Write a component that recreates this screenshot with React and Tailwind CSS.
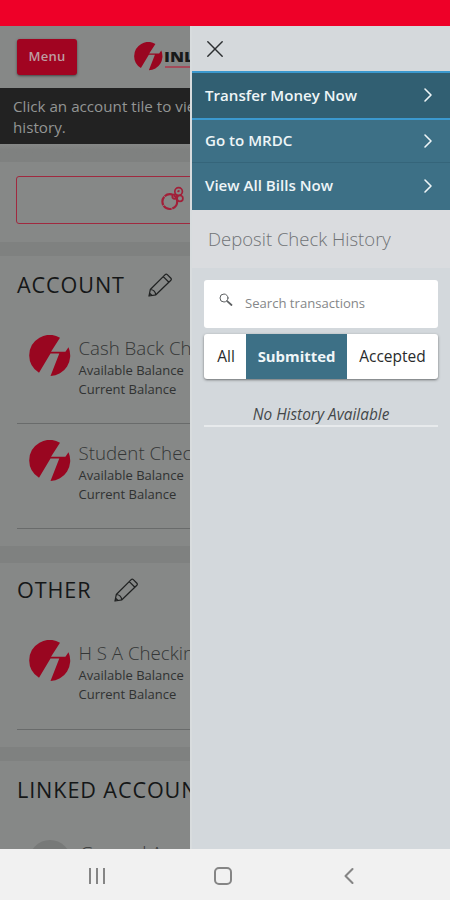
import { ChevronLeft, ChevronRight, X } from "lucide-react";

const actions = ["Transfer Money Now", "Go to MRDC", "View All Bills Now"];

function BrandMark({ className }) {
  return (
    <svg viewBox="0 0 42 42" className={className} fill="currentColor">
      <path d="M31 2.8 22 16.7H36.4L39.5 12.3A20.5 20.5 0 0 1 21.5 41L30.3 18.4H21.5L10 37.7A20.5 20.5 0 0 1 .2 20.5 20.5 20.5 0 0 1 31 2.8Z" />
    </svg>
  );
}

function Pencil() {
  return (
    <svg
      viewBox="0 0 24 24"
      className="h-6 w-6 text-[#202222]"
      fill="none"
      stroke="currentColor"
      strokeWidth="1.25"
      strokeLinejoin="round"
    >
      <path d="M1 23 2.3 16.5 17.2 1.6Q18.3.7 19.3 1.6L22.9 5.2Q23.7 6.2 22.9 7.2L7.9 21.8ZM2.3 16.5Q6.8 16.6 7.9 21.8M15.3 3.6 20.9 9.2M1 23 1.6 20.3 3.7 22.3Z" />
    </svg>
  );
}

function BubblesIcon() {
  return (
    <svg
      viewBox="0 0 24 25"
      className="h-[25px] w-6 text-[#a21f38]"
      fill="none"
      stroke="currentColor"
      strokeWidth="1.7"
    >
      <circle cx="8.8" cy="15.6" r="7.4" strokeWidth="2.2" strokeDasharray="9 .7" />
      <circle cx="17.6" cy="5.5" r="3.8" />
      <circle cx="19" cy="12.4" r="2.9" />
      <circle cx="13.6" cy="10.6" r="2.3" />
      <path d="M16.5 5.8l2-1.2" />
    </svg>
  );
}

function SectionTitle({ children, className = "" }) {
  return (
    <div className={`flex items-center pl-[17px] ${className}`}>
      <h2 className="text-[21.6px] leading-7 tracking-[0.9px] whitespace-nowrap text-[#151717]">
        {children}
      </h2>
    </div>
  );
}

function AccountTile({ name, className = "" }) {
  return (
    <div className={`ml-[17px] flex border-b border-[#696b6b] pl-3 ${className}`}>
      <BrandMark className="h-[42px] w-[42px] shrink-0 text-[#990620]" />
      <div className="ml-[7.5px] whitespace-nowrap">
        <div className="text-[18.7px] leading-[26px] font-light text-[#343636]">{name}</div>
        <div className="text-[13px] leading-[19px] text-[#303232]">
          <div>Available Balance</div>
          <div>Current Balance</div>
        </div>
      </div>
    </div>
  );
}

function AccountsPage() {
  return (
    <main className="flex w-[190px] shrink-0 flex-col overflow-hidden bg-[#868887]">
      <header className="flex h-[62px] shrink-0 items-start pl-[17px]">
        <button className="mt-[13px] h-9 w-[60px] shrink-0 rounded-[3px] bg-[#a10421] pb-px text-[13px] font-semibold tracking-[0.2px] text-[#bd9da1] shadow-sm shadow-black/40">
          Menu
        </button>
        <BrandMark className="mt-4 ml-[57px] h-[29px] w-[29px] shrink-0 text-[#990620]" />
        <div className="mt-[22px] ml-px whitespace-nowrap">
          <div className="origin-left scale-x-115 text-[14.7px] leading-[17px] font-extrabold text-[#171919]">
            INLAND
          </div>
          <div className="mt-px ml-px h-0.5 w-20 bg-[#a34b5a]" />
        </div>
      </header>

      <div className="h-14 shrink-0 bg-[#222222] pt-2 pl-[13px] text-[15.2px] leading-[21px] whitespace-nowrap text-[#939594]">
        Click an account tile to view
        <br />
        history.
      </div>
      <div className="h-[18px] shrink-0 bg-linear-to-b from-[#868887] to-[#7f8180] to-30%" />

      <div className="h-20 shrink-0 pt-[14px] pl-4">
        <div className="flex h-12 w-[260px] items-center rounded-[3px] border-[1.5px] border-[#a0293f] pb-1 pl-36">
          <BubblesIcon />
        </div>
      </div>
      <div className="h-[14px] shrink-0 bg-[#7f8180]" />

      <section className="h-[290px] shrink-0">
        <div className="flex h-[58px] items-center">
          <SectionTitle>ACCOUNT</SectionTitle>
          <div className="ml-[23px]">
            <Pencil />
          </div>
        </div>
        <AccountTile name="Cash Back Checking" className="mt-[21px] h-[89px]" />
        <AccountTile name="Student Checking" className="h-[105px] pt-4" />
      </section>
      <div className="h-[17px] shrink-0 bg-[#7f8180]" />

      <section className="h-[184px] shrink-0">
        <div className="flex h-[54px] items-center">
          <SectionTitle>OTHER</SectionTitle>
          <div className="ml-[23px]">
            <Pencil />
          </div>
        </div>
        <AccountTile name="H S A Checking" className="mt-[23px] h-[90px]" />
      </section>
      <div className="h-[14px] shrink-0 bg-[#7f8180]" />

      <section className="shrink-0">
        <SectionTitle className="h-[57px]">LINKED ACCOUNTS</SectionTitle>
        <div className="mt-[22px] flex pl-[29px]">
          <div className="h-[42px] w-[42px] shrink-0 rounded-full bg-[#777978]" />
          <div className="ml-[9px] text-[18.7px] leading-[26px] font-light whitespace-nowrap text-[#343636]">
            General Account
          </div>
        </div>
      </section>
    </main>
  );
}

function ActionsDrawer() {
  return (
    <aside className="flex w-[260px] shrink-0 flex-col border-l-2 border-[#d8dcde] bg-[#d3d8dc]">
      <div className="flex h-[45px] shrink-0 items-center bg-[#d5d9dc] pl-[11px]">
        <X className="h-6 w-6 text-[#2c2f31]" strokeWidth={1.2} viewBox="2 2 20 20" />
      </div>

      <nav className="flex flex-col">
        {actions.map((label, i) => (
          <button
            key={label}
            className={`flex items-center justify-between pr-[10px] pl-[13px] text-left text-[15.1px] font-semibold text-[#eef5f7] ${
              i === 0
                ? "h-[49px] border-y-2 border-[#3b99cf] bg-[#315f72] pb-px"
                : i === 1
                  ? "h-[43px] border-b border-[#35657a] bg-[#3d7086] pb-px"
                  : "h-[47px] bg-[#3d7086] pb-0.5"
            }`}
          >
            {label}
            <ChevronRight className="h-6 w-6" strokeWidth={1.6} />
          </button>
        ))}
      </nav>

      <h1 className="flex h-[58px] shrink-0 items-center bg-[#dadcdf] pl-4 text-[18.5px] font-light text-[#707376]">
        Deposit Check History
      </h1>

      <div className="mx-3 mt-3 flex h-12 shrink-0 items-center rounded-[3px] bg-white pl-[15px]">
        <svg
          viewBox="0 0 14 14"
          className="mb-2 h-[14px] w-[14px] text-[#5e6163]"
          fill="none"
          stroke="currentColor"
          strokeLinecap="round"
        >
          <circle cx="5" cy="5" r="4" strokeWidth="1" />
          <path d="M8.2 8.2 12.5 12" strokeWidth="1.8" />
        </svg>
        <span className="ml-3 text-[13.1px] text-[#858789]">Search transactions</span>
      </div>

      <div className="mx-3 mt-1.5 flex h-[45px] shrink-0 overflow-hidden rounded-[3px] bg-white text-[15.5px] font-medium text-[#292b2c] shadow-sm shadow-black/40">
        <button className="w-[42px] pl-0.5">All</button>
        <button className="w-[101px] bg-[#3d7086] text-[14.9px] font-bold text-[#f0f6f8]">
          Submitted
        </button>
        <button className="flex-1">Accepted</button>
      </div>

      <div className="mx-3 mt-[25px] h-[23px] shrink-0 border-b-2 border-[#e7eaec] text-center text-[15.4px] leading-[22px] text-[#45484a] italic">
        No History Available
      </div>
    </aside>
  );
}

export default function App() {
  return (
    <div className="flex h-[900px] w-[450px] flex-col overflow-hidden bg-[#f1f1f1] font-['Open_Sans','Noto_Sans',sans-serif]">
      <div className="h-[26px] shrink-0 bg-[#ee0028]" />
      <div className="flex h-[823px] shrink-0 overflow-hidden">
        <AccountsPage />
        <ActionsDrawer />
      </div>
      <div className="flex h-[51px] shrink-0 items-center justify-between pt-[3px] pr-[91px] pl-[84px] text-[#858585]">
        <div className="flex h-4 w-[26px] justify-center gap-[5px]">
          <span className="w-0.5 bg-current" />
          <span className="w-0.5 bg-current" />
          <span className="w-0.5 bg-current" />
        </div>
        <div className="h-[18px] w-[18px] rounded-[5px] border-2 border-current" />
        <ChevronLeft className="-mr-1 h-7 w-7" strokeWidth={1.8} />
      </div>
    </div>
  );
}
